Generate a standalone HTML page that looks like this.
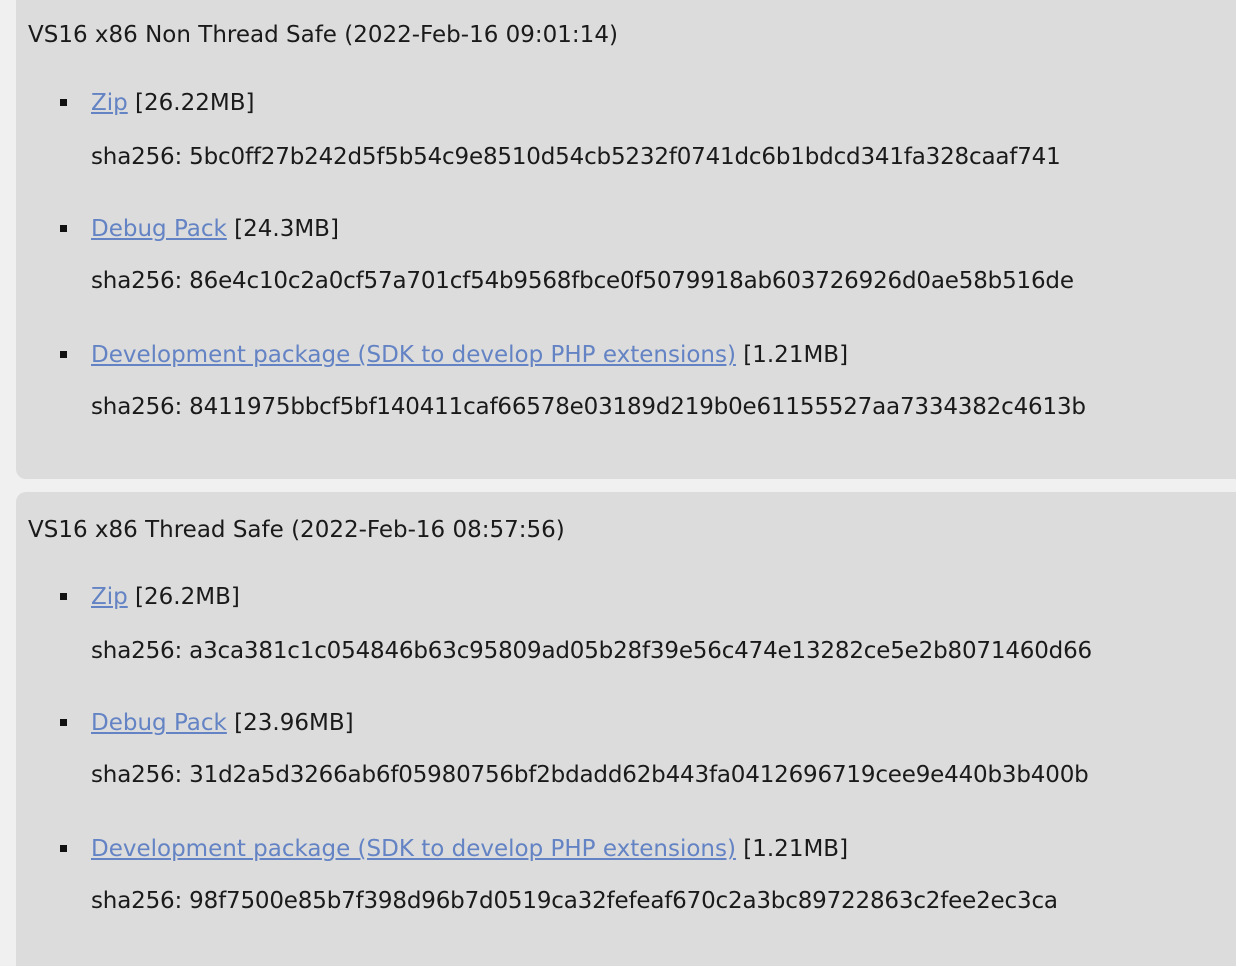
<!DOCTYPE html>
<html><head><meta charset="utf-8"><style>
html,body{margin:0;padding:0;width:1236px;height:966px;overflow:hidden;background:#f0f0f0;font-family:"DejaVu Sans","Liberation Sans",sans-serif;color:#1a1a1a;}
.p{position:absolute;left:16px;width:1240px;background:#dcdcdc;border-radius:10px;}
.t{position:absolute;white-space:nowrap;font-size:23px;line-height:24px;}
.s{letter-spacing:-0.18px;}
a{color:#6383c4;text-decoration:underline;}
.b{position:absolute;width:7px;height:7px;background:#111;left:60px;}
</style></head><body>
<div class="p" style="top:-20px;height:499px"></div>
<div class="p" style="top:492px;height:474px;border-radius:10px 0 0 0"></div>

<div class="t" style="left:28px;top:23px">VS16 x86 Non Thread Safe (2022-Feb-16 09:01:14)</div>
<div class="b" style="top:99px"></div>
<div class="t" style="left:91px;top:91px"><a>Zip</a> [26.22MB]</div>
<div class="t s" style="left:91px;top:145px">sha256: 5bc0ff27b242d5f5b54c9e8510d54cb5232f0741dc6b1bdcd341fa328caaf741</div>
<div class="b" style="top:225px"></div>
<div class="t" style="left:91px;top:217px"><a>Debug Pack</a> [24.3MB]</div>
<div class="t s" style="left:91px;top:269px">sha256: 86e4c10c2a0cf57a701cf54b9568fbce0f5079918ab603726926d0ae58b516de</div>
<div class="b" style="top:351px"></div>
<div class="t" style="left:91px;top:343px"><a>Development package (SDK to develop PHP extensions)</a> [1.21MB]</div>
<div class="t s" style="left:91px;top:395px">sha256: 8411975bbcf5bf140411caf66578e03189d219b0e61155527aa7334382c4613b</div>

<div class="t" style="left:28px;top:518px">VS16 x86 Thread Safe (2022-Feb-16 08:57:56)</div>
<div class="b" style="top:593px"></div>
<div class="t" style="left:91px;top:585px"><a>Zip</a> [26.2MB]</div>
<div class="t s" style="left:91px;top:639px">sha256: a3ca381c1c054846b63c95809ad05b28f39e56c474e13282ce5e2b8071460d66</div>
<div class="b" style="top:719px"></div>
<div class="t" style="left:91px;top:711px"><a>Debug Pack</a> [23.96MB]</div>
<div class="t s" style="left:91px;top:763px">sha256: 31d2a5d3266ab6f05980756bf2bdadd62b443fa0412696719cee9e440b3b400b</div>
<div class="b" style="top:845px"></div>
<div class="t" style="left:91px;top:837px"><a>Development package (SDK to develop PHP extensions)</a> [1.21MB]</div>
<div class="t s" style="left:91px;top:889px">sha256: 98f7500e85b7f398d96b7d0519ca32fefeaf670c2a3bc89722863c2fee2ec3ca</div>
</body></html>
